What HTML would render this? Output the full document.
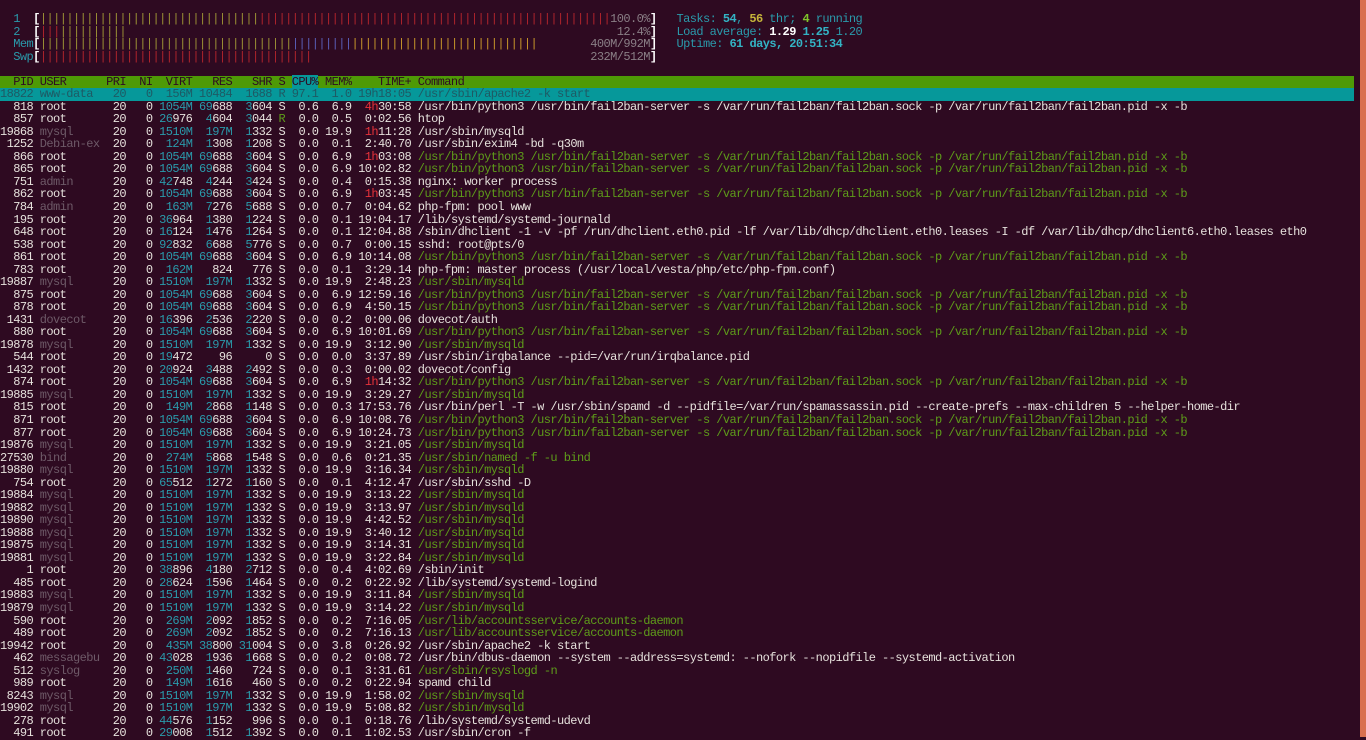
<!DOCTYPE html>
<html><head><meta charset="utf-8">
<style>
html,body{margin:0;padding:0;}
body{width:1366px;height:737px;background:#2e0a21;overflow:hidden;position:relative;font-family:"Liberation Mono",monospace;font-size:12px;letter-spacing:-0.57px;color:#e6e1dc;}
#t{position:absolute;left:0;top:13px;}
#t div{white-space:pre;height:12.54px;line-height:12.54px;}
.c{color:#2a9aab}
.d{color:#6e5a68}
.r{color:#e8323a}
.g{color:#5e9c1a}
.o{color:#9c9235}
.rb{color:#b0242c}
.bl{color:#5a5fb8}
.y{color:#c8962a}
.gy{color:#8a7f86}
.b{color:#fff;font-weight:bold}
.cb{color:#33b3c4;font-weight:bold}
.yb{color:#c5b43a;font-weight:bold}
.gb{color:#7fc62a;font-weight:bold}
.hd{background:#4e9a06;color:#2e0a21;width:1354px}
.hd .s{background:#06989a}
.sel{background:#06989a;color:#1e5a64;width:1354px}
#strip{position:absolute;right:0;top:0;width:6px;height:737px;background:#d9704f;}
</style></head><body>
<div id="t">
<div>  <span class="c">1</span>  <span class="b">[</span><span class="o">|||||||||||||||||||||||||||||||||</span><span class="rb">|||||||||||||||||||||||||||||||||||||||||||||||||||||</span><span class="gy">100.0%</span><span class="b">]</span>   <span class="c">Tasks: </span><span class="cb">54</span><span class="c">, </span><span class="yb">56</span><span class="c"> thr; </span><span class="gb">4</span><span class="c"> running</span></div>
<div>  <span class="c">2</span>  <span class="b">[</span><span class="rb">|||</span><span class="o">||||||||||</span>                                                                          <span class="gy">12.4%</span><span class="b">]</span>   <span class="c">Load average: </span><span class="b">1.29 </span><span class="cb">1.25 </span><span class="c">1.20</span></div>
<div>  <span class="c">Mem</span><span class="b">[</span><span class="o">||||||||||||||||||||||||||||||||||||||</span><span class="bl">|||||||||</span><span class="y">||||||||||||||||||||||||||||</span>        <span class="gy">400M/992M</span><span class="b">]</span>   <span class="c">Uptime: </span><span class="cb">61 days, 20:51:34</span></div>
<div>  <span class="c">Swp</span><span class="b">[</span><span class="rb">|||||||||||||||||||||||||||||||||||||||||</span>                                          <span class="gy">232M/512M</span><span class="b">]</span></div>
<div> </div>
<div class="hd">  PID USER      PRI  NI  VIRT   RES   SHR S <span class="s">CPU%</span> MEM%    TIME+ Command</div>
<div class="sel">18822 www-data   20   0  156M 10484  1688 R 97.1  1.0 19h18:05 /usr/sbin/apache2 -k start</div>
<div>  818 root       20   0 <span class="c">1054M</span> <span class="c">69</span>688  <span class="c">3</span>604 S  0.6  6.9  <span class="r">4h</span>30:58 /usr/bin/python3 /usr/bin/fail2ban-server -s /var/run/fail2ban/fail2ban.sock -p /var/run/fail2ban/fail2ban.pid -x -b</div>
<div>  857 root       20   0 <span class="c">26</span>976  <span class="c">4</span>604  <span class="c">3</span>044 <span class="g">R</span>  0.0  0.5  0:02.56 htop</div>
<div>19868 <span class="d">mysql</span>      20   0 <span class="c">1510M</span>  <span class="c">197M</span>  <span class="c">1</span>332 S  0.0 19.9  <span class="r">1h</span>11:28 /usr/sbin/mysqld</div>
<div> 1252 <span class="d">Debian-ex</span>  20   0  <span class="c">124M</span>  <span class="c">1</span>308  <span class="c">1</span>208 S  0.0  0.1  2:40.70 /usr/sbin/exim4 -bd -q30m</div>
<div>  866 root       20   0 <span class="c">1054M</span> <span class="c">69</span>688  <span class="c">3</span>604 S  0.0  6.9  <span class="r">1h</span>03:08 <span class="g">/usr/bin/python3 /usr/bin/fail2ban-server -s /var/run/fail2ban/fail2ban.sock -p /var/run/fail2ban/fail2ban.pid -x -b</span></div>
<div>  865 root       20   0 <span class="c">1054M</span> <span class="c">69</span>688  <span class="c">3</span>604 S  0.0  6.9 10:02.82 <span class="g">/usr/bin/python3 /usr/bin/fail2ban-server -s /var/run/fail2ban/fail2ban.sock -p /var/run/fail2ban/fail2ban.pid -x -b</span></div>
<div>  751 <span class="d">admin</span>      20   0 <span class="c">42</span>748  <span class="c">4</span>244  <span class="c">3</span>424 S  0.0  0.4  0:15.38 nginx: worker process</div>
<div>  862 root       20   0 <span class="c">1054M</span> <span class="c">69</span>688  <span class="c">3</span>604 S  0.0  6.9  <span class="r">1h</span>03:45 <span class="g">/usr/bin/python3 /usr/bin/fail2ban-server -s /var/run/fail2ban/fail2ban.sock -p /var/run/fail2ban/fail2ban.pid -x -b</span></div>
<div>  784 <span class="d">admin</span>      20   0  <span class="c">163M</span>  <span class="c">7</span>276  <span class="c">5</span>688 S  0.0  0.7  0:04.62 php-fpm: pool www</div>
<div>  195 root       20   0 <span class="c">36</span>964  <span class="c">1</span>380  <span class="c">1</span>224 S  0.0  0.1 19:04.17 /lib/systemd/systemd-journald</div>
<div>  648 root       20   0 <span class="c">16</span>124  <span class="c">1</span>476  <span class="c">1</span>264 S  0.0  0.1 12:04.88 /sbin/dhclient -1 -v -pf /run/dhclient.eth0.pid -lf /var/lib/dhcp/dhclient.eth0.leases -I -df /var/lib/dhcp/dhclient6.eth0.leases eth0</div>
<div>  538 root       20   0 <span class="c">92</span>832  <span class="c">6</span>688  <span class="c">5</span>776 S  0.0  0.7  0:00.15 sshd: root@pts/0</div>
<div>  861 root       20   0 <span class="c">1054M</span> <span class="c">69</span>688  <span class="c">3</span>604 S  0.0  6.9 10:14.08 <span class="g">/usr/bin/python3 /usr/bin/fail2ban-server -s /var/run/fail2ban/fail2ban.sock -p /var/run/fail2ban/fail2ban.pid -x -b</span></div>
<div>  783 root       20   0  <span class="c">162M</span>   824   776 S  0.0  0.1  3:29.14 php-fpm: master process (/usr/local/vesta/php/etc/php-fpm.conf)</div>
<div>19887 <span class="d">mysql</span>      20   0 <span class="c">1510M</span>  <span class="c">197M</span>  <span class="c">1</span>332 S  0.0 19.9  2:48.23 <span class="g">/usr/sbin/mysqld</span></div>
<div>  875 root       20   0 <span class="c">1054M</span> <span class="c">69</span>688  <span class="c">3</span>604 S  0.0  6.9 12:59.16 <span class="g">/usr/bin/python3 /usr/bin/fail2ban-server -s /var/run/fail2ban/fail2ban.sock -p /var/run/fail2ban/fail2ban.pid -x -b</span></div>
<div>  878 root       20   0 <span class="c">1054M</span> <span class="c">69</span>688  <span class="c">3</span>604 S  0.0  6.9  4:50.15 <span class="g">/usr/bin/python3 /usr/bin/fail2ban-server -s /var/run/fail2ban/fail2ban.sock -p /var/run/fail2ban/fail2ban.pid -x -b</span></div>
<div> 1431 <span class="d">dovecot</span>    20   0 <span class="c">16</span>396  <span class="c">2</span>536  <span class="c">2</span>220 S  0.0  0.2  0:00.06 dovecot/auth</div>
<div>  880 root       20   0 <span class="c">1054M</span> <span class="c">69</span>688  <span class="c">3</span>604 S  0.0  6.9 10:01.69 <span class="g">/usr/bin/python3 /usr/bin/fail2ban-server -s /var/run/fail2ban/fail2ban.sock -p /var/run/fail2ban/fail2ban.pid -x -b</span></div>
<div>19878 <span class="d">mysql</span>      20   0 <span class="c">1510M</span>  <span class="c">197M</span>  <span class="c">1</span>332 S  0.0 19.9  3:12.90 <span class="g">/usr/sbin/mysqld</span></div>
<div>  544 root       20   0 <span class="c">19</span>472    96     0 S  0.0  0.0  3:37.89 /usr/sbin/irqbalance --pid=/var/run/irqbalance.pid</div>
<div> 1432 root       20   0 <span class="c">20</span>924  <span class="c">3</span>488  <span class="c">2</span>492 S  0.0  0.3  0:00.02 dovecot/config</div>
<div>  874 root       20   0 <span class="c">1054M</span> <span class="c">69</span>688  <span class="c">3</span>604 S  0.0  6.9  <span class="r">1h</span>14:32 <span class="g">/usr/bin/python3 /usr/bin/fail2ban-server -s /var/run/fail2ban/fail2ban.sock -p /var/run/fail2ban/fail2ban.pid -x -b</span></div>
<div>19885 <span class="d">mysql</span>      20   0 <span class="c">1510M</span>  <span class="c">197M</span>  <span class="c">1</span>332 S  0.0 19.9  3:29.27 <span class="g">/usr/sbin/mysqld</span></div>
<div>  815 root       20   0  <span class="c">149M</span>  <span class="c">2</span>868  <span class="c">1</span>148 S  0.0  0.3 17:53.76 /usr/bin/perl -T -w /usr/sbin/spamd -d --pidfile=/var/run/spamassassin.pid --create-prefs --max-children 5 --helper-home-dir</div>
<div>  871 root       20   0 <span class="c">1054M</span> <span class="c">69</span>688  <span class="c">3</span>604 S  0.0  6.9 10:08.76 <span class="g">/usr/bin/python3 /usr/bin/fail2ban-server -s /var/run/fail2ban/fail2ban.sock -p /var/run/fail2ban/fail2ban.pid -x -b</span></div>
<div>  877 root       20   0 <span class="c">1054M</span> <span class="c">69</span>688  <span class="c">3</span>604 S  0.0  6.9 10:24.73 <span class="g">/usr/bin/python3 /usr/bin/fail2ban-server -s /var/run/fail2ban/fail2ban.sock -p /var/run/fail2ban/fail2ban.pid -x -b</span></div>
<div>19876 <span class="d">mysql</span>      20   0 <span class="c">1510M</span>  <span class="c">197M</span>  <span class="c">1</span>332 S  0.0 19.9  3:21.05 <span class="g">/usr/sbin/mysqld</span></div>
<div>27530 <span class="d">bind</span>       20   0  <span class="c">274M</span>  <span class="c">5</span>868  <span class="c">1</span>548 S  0.0  0.6  0:21.35 <span class="g">/usr/sbin/named -f -u bind</span></div>
<div>19880 <span class="d">mysql</span>      20   0 <span class="c">1510M</span>  <span class="c">197M</span>  <span class="c">1</span>332 S  0.0 19.9  3:16.34 <span class="g">/usr/sbin/mysqld</span></div>
<div>  754 root       20   0 <span class="c">65</span>512  <span class="c">1</span>272  <span class="c">1</span>160 S  0.0  0.1  4:12.47 /usr/sbin/sshd -D</div>
<div>19884 <span class="d">mysql</span>      20   0 <span class="c">1510M</span>  <span class="c">197M</span>  <span class="c">1</span>332 S  0.0 19.9  3:13.22 <span class="g">/usr/sbin/mysqld</span></div>
<div>19882 <span class="d">mysql</span>      20   0 <span class="c">1510M</span>  <span class="c">197M</span>  <span class="c">1</span>332 S  0.0 19.9  3:13.97 <span class="g">/usr/sbin/mysqld</span></div>
<div>19890 <span class="d">mysql</span>      20   0 <span class="c">1510M</span>  <span class="c">197M</span>  <span class="c">1</span>332 S  0.0 19.9  4:42.52 <span class="g">/usr/sbin/mysqld</span></div>
<div>19888 <span class="d">mysql</span>      20   0 <span class="c">1510M</span>  <span class="c">197M</span>  <span class="c">1</span>332 S  0.0 19.9  3:40.12 <span class="g">/usr/sbin/mysqld</span></div>
<div>19875 <span class="d">mysql</span>      20   0 <span class="c">1510M</span>  <span class="c">197M</span>  <span class="c">1</span>332 S  0.0 19.9  3:14.31 <span class="g">/usr/sbin/mysqld</span></div>
<div>19881 <span class="d">mysql</span>      20   0 <span class="c">1510M</span>  <span class="c">197M</span>  <span class="c">1</span>332 S  0.0 19.9  3:22.84 <span class="g">/usr/sbin/mysqld</span></div>
<div>    1 root       20   0 <span class="c">38</span>896  <span class="c">4</span>180  <span class="c">2</span>712 S  0.0  0.4  4:02.69 /sbin/init</div>
<div>  485 root       20   0 <span class="c">28</span>624  <span class="c">1</span>596  <span class="c">1</span>464 S  0.0  0.2  0:22.92 /lib/systemd/systemd-logind</div>
<div>19883 <span class="d">mysql</span>      20   0 <span class="c">1510M</span>  <span class="c">197M</span>  <span class="c">1</span>332 S  0.0 19.9  3:11.84 <span class="g">/usr/sbin/mysqld</span></div>
<div>19879 <span class="d">mysql</span>      20   0 <span class="c">1510M</span>  <span class="c">197M</span>  <span class="c">1</span>332 S  0.0 19.9  3:14.22 <span class="g">/usr/sbin/mysqld</span></div>
<div>  590 root       20   0  <span class="c">269M</span>  <span class="c">2</span>092  <span class="c">1</span>852 S  0.0  0.2  7:16.05 <span class="g">/usr/lib/accountsservice/accounts-daemon</span></div>
<div>  489 root       20   0  <span class="c">269M</span>  <span class="c">2</span>092  <span class="c">1</span>852 S  0.0  0.2  7:16.13 <span class="g">/usr/lib/accountsservice/accounts-daemon</span></div>
<div>19942 root       20   0  <span class="c">435M</span> <span class="c">38</span>800 <span class="c">31</span>004 S  0.0  3.8  0:26.92 /usr/sbin/apache2 -k start</div>
<div>  462 <span class="d">messagebu</span>  20   0 <span class="c">43</span>028  <span class="c">1</span>936  <span class="c">1</span>668 S  0.0  0.2  0:08.72 /usr/bin/dbus-daemon --system --address=systemd: --nofork --nopidfile --systemd-activation</div>
<div>  512 <span class="d">syslog</span>     20   0  <span class="c">250M</span>  <span class="c">1</span>460   724 S  0.0  0.1  3:31.61 <span class="g">/usr/sbin/rsyslogd -n</span></div>
<div>  989 root       20   0  <span class="c">149M</span>  <span class="c">1</span>616   460 S  0.0  0.2  0:22.94 spamd child</div>
<div> 8243 <span class="d">mysql</span>      20   0 <span class="c">1510M</span>  <span class="c">197M</span>  <span class="c">1</span>332 S  0.0 19.9  1:58.02 <span class="g">/usr/sbin/mysqld</span></div>
<div>19902 <span class="d">mysql</span>      20   0 <span class="c">1510M</span>  <span class="c">197M</span>  <span class="c">1</span>332 S  0.0 19.9  5:08.82 <span class="g">/usr/sbin/mysqld</span></div>
<div>  278 root       20   0 <span class="c">44</span>576  <span class="c">1</span>152   996 S  0.0  0.1  0:18.76 /lib/systemd/systemd-udevd</div>
<div>  491 root       20   0 <span class="c">29</span>008  <span class="c">1</span>512  <span class="c">1</span>392 S  0.0  0.1  1:02.53 /usr/sbin/cron -f</div>
</div>
<div id="strip"></div>
</body></html>
